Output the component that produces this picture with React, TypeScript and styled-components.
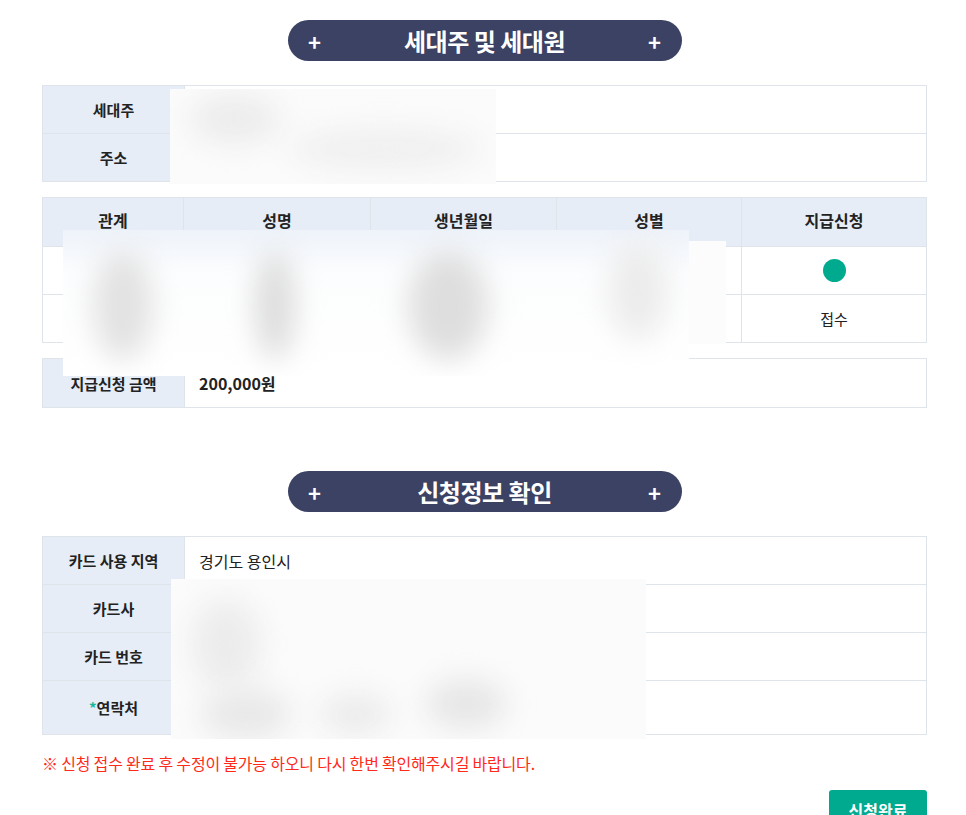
import React from "react";
import styled, { createGlobalStyle } from "styled-components";

const Global = createGlobalStyle`
  html, body { margin: 0; padding: 0; background: #fff; overflow: hidden; }
  body { font-family: "Noto Sans CJK KR", "Noto Sans", sans-serif; color: #222; }
`;

const Page = styled.div`
  width: 885px;
  margin-left: 42px;
  padding-top: 20px;
  display: flex;
  flex-direction: column;
  position: relative;
`;

const Pill = styled.div<{ $mt?: number }>`
  align-self: center;
  width: 394px;
  height: 41px;
  margin-top: ${(p) => p.$mt ?? 0}px;
  border-radius: 21px;
  background: #3b4263;
  color: #fff;
  display: flex;
  align-items: center;
  justify-content: space-between;
  padding: 0 20px;
  box-sizing: border-box;
  font-weight: 700;
`;

const Plus = styled.span`
  font-size: 22px;
  line-height: 1;
  font-weight: 700;
  width: 14px;
  text-align: center;
`;

const PillTitle = styled.span`
  font-size: 24px;
  letter-spacing: -0.5px;
`;

const Table = styled.div<{ $cols: string; $mt: number }>`
  display: grid;
  grid-template-columns: ${(p) => p.$cols};
  margin-top: ${(p) => p.$mt}px;
  border-top: 1px solid #dfe4ea;
  border-left: 1px solid #dfe4ea;
  position: relative;
`;

const Cell = styled.div<{ $head?: boolean; $h?: number; $align?: string; $bold?: boolean; $fs?: number; $pb?: number }>`
  height: ${(p) => p.$h ?? 48}px;
  box-sizing: border-box;
  border-right: 1px solid #dfe4ea;
  border-bottom: 1px solid #dfe4ea;
  background: ${(p) => (p.$head ? "#e6edf7" : "#fff")};
  display: flex;
  align-items: center;
  justify-content: ${(p) => p.$align ?? (p.$head ? "center" : "flex-start")};
  padding-left: ${(p) => (p.$align === "center" || p.$head ? 0 : 14)}px;
  padding-bottom: ${(p) => p.$pb ?? 0}px;
  font-size: ${(p) => p.$fs ?? 15}px;
  font-weight: ${(p) => (p.$head || p.$bold ? 700 : 400)};
  color: #222;
`;

const Dot = styled.span`
  width: 23px;
  height: 23px;
  border-radius: 50%;
  background: #00aa8f;
`;

const Star = styled.span`
  color: #1bb79a;
`;

const Redact = styled.div<{ $l: number; $t: number; $w: number; $h: number }>`
  position: absolute;
  left: ${(p) => p.$l}px;
  top: ${(p) => p.$t}px;
  width: ${(p) => p.$w}px;
  height: ${(p) => p.$h}px;
  background: #fbfbfb;
  overflow: hidden;
  z-index: 2;
`;

const Blob = styled.div<{ $l: number; $t: number; $w: number; $h: number; $c?: string; $b?: number }>`
  position: absolute;
  left: ${(p) => p.$l}px;
  top: ${(p) => p.$t}px;
  width: ${(p) => p.$w}px;
  height: ${(p) => p.$h}px;
  border-radius: 50%;
  background: ${(p) => p.$c ?? "#e4e4e4"};
  filter: blur(${(p) => p.$b ?? 14}px);
`;

const Note = styled.p`
  margin: 17px 0 0;
  color: #ff2a1a;
  font-size: 16px;
  letter-spacing: -0.2px;
  line-height: 22px;
`;

const Actions = styled.div`
  display: flex;
  justify-content: flex-end;
  margin-top: 16px;
`;

const Button = styled.button`
  width: 98px;
  height: 44px;
  border: none;
  border-radius: 3px;
  background: #00aa8f;
  color: #fff;
  font-family: inherit;
  font-size: 16px;
  font-weight: 700;
  padding: 0;
  display: flex;
  justify-content: center;
  padding-top: 8px;
  box-sizing: border-box;
`;

export default function App() {
  return (
    <>
      <Global />
      <Page>
        <Pill>
          <Plus>+</Plus>
          <PillTitle>세대주 및 세대원</PillTitle>
          <Plus>+</Plus>
        </Pill>

        <Table $cols="142px 1fr" $mt={24}>
          <Cell $head>세대주</Cell>
          <Cell />
          <Cell $head>주소</Cell>
          <Cell />
          <Redact $l={127} $t={3} $w={326} $h={95}>
            <Blob $l={20} $t={5} $w={90} $h={50} $c="#ececec" />
            <Blob $l={120} $t={40} $w={190} $h={40} $c="#efefef" />
          </Redact>
        </Table>

        <Table $cols="141px 187px 186px 185px 1fr" $mt={15}>
          <Cell $head $h={49} $fs={16} $pb={4}>관계</Cell>
          <Cell $head $h={49} $fs={16} $pb={4}>성명</Cell>
          <Cell $head $h={49} $fs={16} $pb={4}>생년월일</Cell>
          <Cell $head $h={49} $fs={16} $pb={4}>성별</Cell>
          <Cell $head $h={49} $fs={16} $pb={4}>지급신청</Cell>
          <Cell /><Cell /><Cell /><Cell />
          <Cell $align="center"><Dot /></Cell>
          <Cell /><Cell /><Cell /><Cell />
          <Cell $align="center">접수</Cell>
          <Redact $l={20} $t={32} $w={626} $h={146} style={{ background: "linear-gradient(#eef3fa, #fcfdfe 30%, #fff)" }}>
            <Blob $l={30} $t={20} $w={60} $h={110} $c="#e2e2e2" />
            <Blob $l={192} $t={20} $w={40} $h={110} $c="#dcdcdc" />
            <Blob $l={345} $t={20} $w={80} $h={110} $c="#dedede" />
            <Blob $l={545} $t={10} $w={60} $h={100} $c="#ececec" />
          </Redact>
          <Redact $l={646} $t={43} $w={37} $h={103} style={{ background: "#fcfcfc" }} />
        </Table>

        <Table $cols="142px 1fr" $mt={15}>
          <Cell $head $h={49}>지급신청 금액</Cell>
          <Cell $h={49} $bold $fs={16}>200,000원</Cell>
        </Table>

        <Pill $mt={63}>
          <Plus>+</Plus>
          <PillTitle>신청정보 확인</PillTitle>
          <Plus>+</Plus>
        </Pill>

        <Table $cols="142px 1fr" $mt={24}>
          <Cell $head>카드 사용 지역</Cell>
          <Cell $fs={16}>경기도 용인시</Cell>
          <Cell $head>카드사</Cell>
          <Cell />
          <Cell $head>카드 번호</Cell>
          <Cell />
          <Cell $head $h={54}><Star>*</Star>연락처</Cell>
          <Cell $h={54} />
          <Redact $l={128} $t={42} $w={475} $h={160}>
            <Blob $l={20} $t={20} $w={70} $h={90} $c="#ececec" />
            <Blob $l={30} $t={110} $w={90} $h={50} $c="#e8e8e8" />
            <Blob $l={150} $t={115} $w={70} $h={40} $c="#ebebeb" />
            <Blob $l={255} $t={100} $w={80} $h={50} $c="#e6e6e6" />
          </Redact>
        </Table>

        <Note>※ 신청 접수 완료 후 수정이 불가능 하오니 다시 한번 확인해주시길 바랍니다.</Note>

        <Actions>
          <Button>신청완료</Button>
        </Actions>
      </Page>
    </>
  );
}
